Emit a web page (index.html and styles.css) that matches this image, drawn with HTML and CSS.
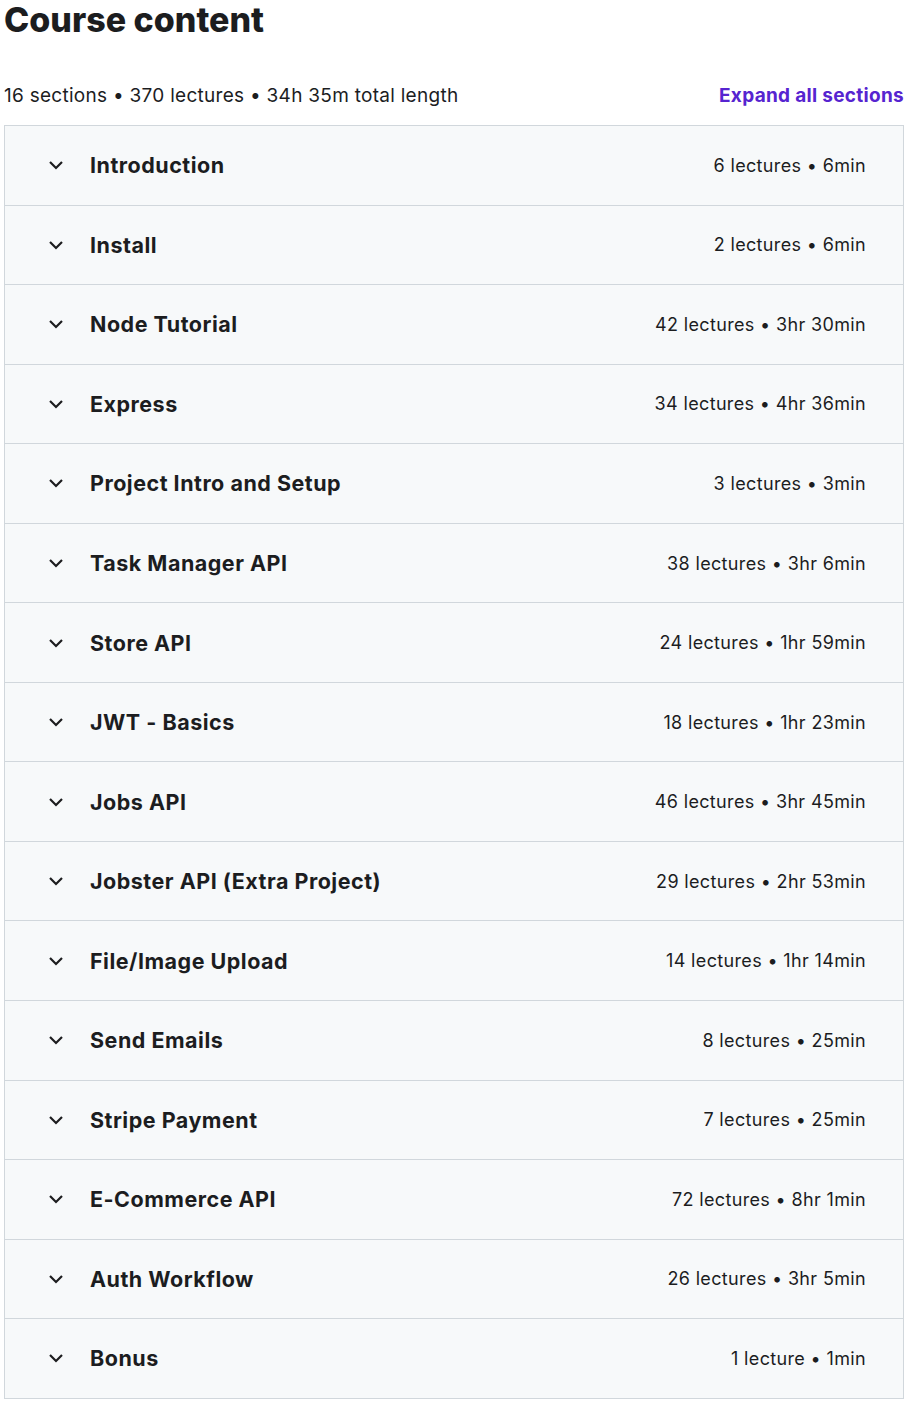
FILE: index.html
```html
<!DOCTYPE html>
<html lang="en">
<head>
  <meta charset="UTF-8">
  <title>Course content</title>
  <link rel="stylesheet" href="styles.css">
</head>
<body>
  <section class="course-content">
    <h2 class="cc-title">Course content</h2>
    <div class="cc-summary">
      <span>16 sections • 370 lectures • 34h 35m total length</span>
      <button class="expand-all" type="button">Expand all sections</button>
    </div>
    <div class="sections">
      <div class="section-row"><span class="chev"><svg viewBox="0 0 14 8"><path d="M1 1l6 6 6-6"/></svg></span><span class="section-name">Introduction</span><span class="section-meta">6 lectures • 6min</span></div>
      <div class="section-row"><span class="chev"><svg viewBox="0 0 14 8"><path d="M1 1l6 6 6-6"/></svg></span><span class="section-name">Install</span><span class="section-meta">2 lectures • 6min</span></div>
      <div class="section-row"><span class="chev"><svg viewBox="0 0 14 8"><path d="M1 1l6 6 6-6"/></svg></span><span class="section-name">Node Tutorial</span><span class="section-meta">42 lectures • 3hr 30min</span></div>
      <div class="section-row"><span class="chev"><svg viewBox="0 0 14 8"><path d="M1 1l6 6 6-6"/></svg></span><span class="section-name">Express</span><span class="section-meta">34 lectures • 4hr 36min</span></div>
      <div class="section-row"><span class="chev"><svg viewBox="0 0 14 8"><path d="M1 1l6 6 6-6"/></svg></span><span class="section-name">Project Intro and Setup</span><span class="section-meta">3 lectures • 3min</span></div>
      <div class="section-row"><span class="chev"><svg viewBox="0 0 14 8"><path d="M1 1l6 6 6-6"/></svg></span><span class="section-name">Task Manager API</span><span class="section-meta">38 lectures • 3hr 6min</span></div>
      <div class="section-row"><span class="chev"><svg viewBox="0 0 14 8"><path d="M1 1l6 6 6-6"/></svg></span><span class="section-name">Store API</span><span class="section-meta">24 lectures • 1hr 59min</span></div>
      <div class="section-row"><span class="chev"><svg viewBox="0 0 14 8"><path d="M1 1l6 6 6-6"/></svg></span><span class="section-name">JWT - Basics</span><span class="section-meta">18 lectures • 1hr 23min</span></div>
      <div class="section-row"><span class="chev"><svg viewBox="0 0 14 8"><path d="M1 1l6 6 6-6"/></svg></span><span class="section-name">Jobs API</span><span class="section-meta">46 lectures • 3hr 45min</span></div>
      <div class="section-row"><span class="chev"><svg viewBox="0 0 14 8"><path d="M1 1l6 6 6-6"/></svg></span><span class="section-name">Jobster API (Extra Project)</span><span class="section-meta">29 lectures • 2hr 53min</span></div>
      <div class="section-row"><span class="chev"><svg viewBox="0 0 14 8"><path d="M1 1l6 6 6-6"/></svg></span><span class="section-name">File/Image Upload</span><span class="section-meta">14 lectures • 1hr 14min</span></div>
      <div class="section-row"><span class="chev"><svg viewBox="0 0 14 8"><path d="M1 1l6 6 6-6"/></svg></span><span class="section-name">Send Emails</span><span class="section-meta">8 lectures • 25min</span></div>
      <div class="section-row"><span class="chev"><svg viewBox="0 0 14 8"><path d="M1 1l6 6 6-6"/></svg></span><span class="section-name">Stripe Payment</span><span class="section-meta">7 lectures • 25min</span></div>
      <div class="section-row"><span class="chev"><svg viewBox="0 0 14 8"><path d="M1 1l6 6 6-6"/></svg></span><span class="section-name">E-Commerce API</span><span class="section-meta">72 lectures • 8hr 1min</span></div>
      <div class="section-row"><span class="chev"><svg viewBox="0 0 14 8"><path d="M1 1l6 6 6-6"/></svg></span><span class="section-name">Auth Workflow</span><span class="section-meta">26 lectures • 3hr 5min</span></div>
      <div class="section-row"><span class="chev"><svg viewBox="0 0 14 8"><path d="M1 1l6 6 6-6"/></svg></span><span class="section-name">Bonus</span><span class="section-meta">1 lecture • 1min</span></div>
    </div>
  </section>
</body>
</html>
```

FILE: styles.css
```css
body {
  margin: 0;
  padding: 0 3px 0 4px;
  background: #fff;
  color: #1c1d1f;
  font-family: Inter, "Noto Sans", sans-serif;
}
.cc-title {
  margin: 0;
  font-size: 34px;
  line-height: 40px;
  font-weight: 800;
}
.cc-summary {
  display: flex;
  justify-content: space-between;
  align-items: center;
  margin-top: 41px;
  height: 28px;
  margin-bottom: 16px;
  font-size: 19px;
  letter-spacing: 0.28px;
}
.expand-all {
  border: none;
  background: none;
  padding: 0;
  font-family: inherit;
  font-size: 19px;
  font-weight: 700;
  letter-spacing: 0.3px;
  color: #5624d0;
  cursor: pointer;
}
.sections {
  border: 1px solid #d1d7dc;
  border-bottom: none;
}
.section-row {
  display: flex;
  align-items: center;
  height: 78.55px;
  border-bottom: 1px solid #d1d7dc;
  background: #f7f9fa;
  padding: 0 37px 0 44px;
}
.chev {
  width: 14px;
  height: 8px;
  margin-right: 27px;
  display: flex;
}
.chev svg {
  width: 14px;
  height: 8px;
  overflow: visible;
  fill: none;
  stroke: #1c1d1f;
  stroke-width: 2.2;
}
.section-name {
  flex: 1;
  font-size: 21.5px;
  font-weight: 700;
  letter-spacing: 0.5px;
}
.section-meta {
  font-size: 18px;
  letter-spacing: 0.35px;
}
```
